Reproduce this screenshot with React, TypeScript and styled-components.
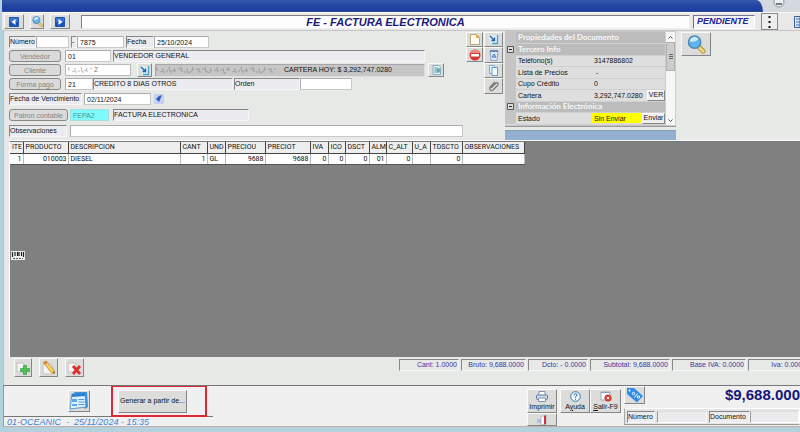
import React from "react";
import styled, { createGlobalStyle, css } from "styled-components";

const heading = 'Lato, "Liberation Sans", Arial, sans-serif';
const grid = 'Roboto, "Liberation Sans", Arial, sans-serif';
const sans = '"Liberation Sans", Arial, sans-serif';

const GlobalStyle = createGlobalStyle`
  *, *::before, *::after { box-sizing: border-box; }
  body { margin: 0; background: #c3dae4; overflow: hidden; }
  button, input { font: inherit; color: inherit; margin: 0; border-radius: 0; }
  svg { display: block; flex: none; }
`;

const raised = css`
  border: 1px solid;
  border-color: #fbfbfb #868686 #868686 #fbfbfb;
  background: #dcdcdb;
`;

const sunken = css`
  border: 1px solid;
  border-color: #868688 #f6f6f8 #f6f6f8 #868688;
`;

const Page = styled.div`
  display: flex;
  flex-direction: column;
  min-height: 100vh;
  padding: 0 0 5px 2px;
  background: #b4d2dd;
  font: 7px/10px ${sans};
  color: #111;
`;

const TitleBar = styled.header`
  display: flex;
  height: 12px;
  background: #d3d9de;
`;

const TitleFill = styled.div`
  flex: 1;
  background: linear-gradient(#3558a8, #2246a4 50%, #1c3f9f);
  border-bottom: 1px solid #2b4a90;
  border-top-right-radius: 8px 14px;
`;

const TitleEnd = styled.div`
  width: 37px;
  padding-left: 9px;
`;

const Toolbar = styled.nav`
  display: flex;
  align-items: center;
  height: 19px;
  padding: 1px 0 1px 2px;
  background: #e8e8e8;
  border-top: 1px solid #fafafa;
  border-bottom: 1px solid #c6c6c6;
  overflow: hidden;
`;

const ToolButton = styled.button<{ $w?: number; $h?: number }>`
  ${raised}
  display: flex;
  flex: none;
  flex-direction: column;
  align-items: center;
  justify-content: center;
  width: ${(p) => p.$w ?? 18}px;
  height: ${(p) => p.$h ?? 15}px;
  padding: 0;
  white-space: nowrap;
`;

const NavGroup = styled.div`
  display: flex;
  gap: 6px;
  width: 77px;
  flex: none;
`;

const DocTitle = styled.h1`
  flex: 1;
  height: 14px;
  margin: 0;
  border: 1px solid;
  border-color: #808080 #eee #eee #808080;
  background: #fdfdfd;
  color: #1b1b7c;
  font: italic bold 11px/12px ${sans};
  text-align: center;
`;

const StateBox = styled.output`
  width: 62px;
  height: 14px;
  margin: 0 6px 0 3px;
  padding-left: 3px;
  border: 1px solid;
  border-color: #70708c #fff #fff #70708c;
  background: #f4f4f8;
  color: #23239b;
  font: italic bold 9px/11px ${sans};
`;

const MenuButton = styled.button`
  display: flex;
  align-items: center;
  justify-content: center;
  width: 17px;
  height: 17px;
  margin-right: 16px;
  padding: 0;
  border: 1px solid #8b8b8b;
  background: #eee;
`;

const Body = styled.main`
  display: flex;
  flex: 1;
  flex-direction: column;
  margin-left: 1px;
  padding-left: 5px;
  border-left: 1px solid #b3c0c8;
  background: #e7e9e7;
`;

const Upper = styled.section`
  display: flex;
  align-items: flex-start;
  height: 110px;
  border-bottom: 1px solid #fff;
`;

const Form = styled.form`
  width: 457px;
  padding-top: 4px;
  flex: none;
`;

const FormRow = styled.div<{ $h: number }>`
  display: flex;
  align-items: center;
  height: ${(p) => p.$h}px;
  padding-right: 3px;
`;

const Label = styled.label<{ $w: number }>`
  ${sunken}
  width: ${(p) => p.$w}px;
  height: 12px;
  flex: none;
  background: #ececf0;
  line-height: 10px;
  white-space: nowrap;
`;

const Input = styled.input<{ $w?: number; $cyan?: boolean }>`
  width: ${(p) => (p.$w ? `${p.$w}px` : "auto")};
  flex: ${(p) => (p.$w ? "none" : "1")};
  min-width: 0;
  height: 12px;
  padding: 0 2px;
  border: 1px solid #c2c2c2;
  border-color: ${(p) => (p.$cyan ? "#a9dcdc" : "#adadad #c8c8c8 #c8c8c8 #adadad")};
  background: ${(p) => (p.$cyan ? "#7ffcfa" : "#fefefe")};
  color: ${(p) => (p.$cyan ? "#4d9494" : "#111")};
  line-height: 10px;
`;

const LookupButton = styled.button<{ $w: number }>`
  width: ${(p) => p.$w}px;
  height: 12px;
  padding: 0;
  flex: none;
  border: 1px solid #888;
  border-radius: 3px;
  background: #dadada;
  color: #848484;
  line-height: 9px;
  white-space: nowrap;
`;

const Gap = styled.span<{ $w: number }>`
  flex: none;
  width: ${(p) => p.$w}px;
`;

const MaskedField = styled.div`
  display: flex;
  align-items: center;
  width: 66px;
  height: 12px;
  padding-left: 2px;
  border: 1px solid #b8b8b8;
  background: #fefefe;

  input { border: 0; background: transparent; padding: 0 1px; height: 10px; color: #777; }
`;

const ClientInfo = styled.output`
  ${sunken}
  display: flex;
  align-items: center;
  justify-content: space-between;
  width: 270px;
  height: 13px;
  padding-right: 32px;
  border-color: #a6a6a6 #ddd #ddd #a6a6a6;
  background: #c6c6c6;
  white-space: nowrap;
`;

const ButtonColumn = styled.div<{ $w: number }>`
  display: flex;
  flex-direction: column;
  width: ${(p) => p.$w}px;
  flex: none;
  padding-top: 1px;
`;

const Side = styled.aside`
  width: 171px;
  margin-left: 2px;
  flex: none;
`;

const PanelFrame = styled.div`
  display: flex;
  height: 96px;
  margin-bottom: 3px;
  background: #c5c5c5;
  border-bottom: 1px solid #999;
`;

const PanelTable = styled.table`
  flex: 1;
  align-self: flex-start;
  border-collapse: collapse;
  table-layout: fixed;
  width: 160px;
  margin-top: 1px;
  background: #dedede;
  line-height: 9px;

  tr { height: 12px; }
  tr:nth-child(odd) { height: 11px; }
  td, th { padding: 0 0 0 2px; text-align: left; border-bottom: 1px solid #d0d0d0; white-space: nowrap; height: inherit; }
  .gutter { background: #c5c5c5; border: 0; padding: 0 2px; }
`;

const PanelHead = styled.th`
  background: #bcbcbc;
  color: #f8f8f8;
  font: bold 8px/9px ${heading};
`;

const StateCell = styled.div<{ $hot?: boolean }>`
  display: flex;
  align-items: center;
  justify-content: space-between;
  height: 10px;
  margin-left: -2px;
  padding-left: 2px;
  background: ${(p) => (p.$hot ? "#ffff00" : "transparent")};
`;

const SmallButton = styled.button<{ $w: number }>`
  ${raised}
  width: ${(p) => p.$w}px;
  height: 11px;
  padding: 0;
  background: #eee;
  line-height: 8px;
`;

const ScrollBar = styled.div`
  display: flex;
  flex-direction: column;
  align-items: center;
  width: 11px;
  flex: none;
  padding: 4px 0 3px;
  background: #f7f7f7;
  border: 1px solid #ccc;
`;

const Thumb = styled.div`
  display: flex;
  align-items: center;
  justify-content: center;
  width: 9px;
  height: 29px;
  margin: 3px 0 auto;
  background: #cdcdcd;
  border: 1px solid #b0b0b0;
`;

const BlueStrip = styled.div`
  height: 10px;
  background: #93b0d2;
  border-top: 1px solid #8aa0ba;
`;

const GridArea = styled.section`
  position: relative;
  flex: 1;
  border-top: 1px solid #777;
  border-left: 1px solid #fff;
  background: #808080;
`;

const Items = styled.table`
  width: 514px;
  border-collapse: collapse;
  table-layout: fixed;
  background: #fdfdfd;
  font: 7px/10px ${grid};

  th, td { height: 11px; padding: 0 1px 0 2px; white-space: nowrap; font-weight: normal; }
  th { padding: 0 0 0 2px; text-align: left; background: #eeeeee; border-right: 1px solid #444; border-bottom: 1px solid #444; }
  td { border-right: 1px solid #bbb; border-bottom: 1px solid #555; }
`;

const Cell = styled.td<{ $left?: boolean }>`
  text-align: ${(p) => (p.$left ? "left" : "right")};
`;

const BarcodeButton = styled.button`
  position: absolute;
  left: 1px;
  top: 109px;
  padding: 0;
  border: 0;
  background: #eee;
`;

const TotalsBar = styled.section`
  display: flex;
  align-items: flex-start;
  justify-content: space-between;
  height: 28px;
  padding: 1px 0 0 5px;
  background: #e7e9e7;
`;

const EditButtons = styled.div`
  display: flex;
  gap: 7px;
`;

const Totals = styled.div`
  display: flex;
  width: 401px;
  gap: 2px;
  padding-top: 1px;
  overflow: hidden;
  color: #3e33a2;
`;

const Total = styled.output<{ $w: number }>`
  ${sunken}
  flex: none;
  width: ${(p) => p.$w}px;
  height: 12px;
  padding-right: 1px;
  text-align: right;
  white-space: nowrap;
`;

const Footer = styled.footer`
  display: flex;
  align-items: flex-start;
  height: 42px;
  margin-left: 1px;
  border-top: 1px solid #777;
  border-left: 1px solid #999;
  border-bottom: 1px solid #c2adb0;
  background: #f0f0f0;
  overflow: hidden;
`;

const FooterLeft = styled.div`
  flex: 1;
`;

const FooterActions = styled.div`
  display: flex;
  height: 30px;
  gap: 21px;
  padding: 0 0 0 64px;
  align-items: center;
`;

const Highlight = styled.div`
  display: flex;
  align-items: center;
  width: 96px;
  height: 32px;
  padding-left: 5px;
  border: 2px solid #dc2734;
`;

const StatusLine = styled.p`
  width: 209px;
  height: 11px;
  margin: 0;
  padding-left: 3px;
  border-top: 1px solid #777;
  color: #3d82d4;
  font: italic 9px/10px ${sans};
  white-space: pre;
`;

const FooterButtons = styled.div`
  display: flex;
  padding-top: 3px;
`;

const FooterRight = styled.div`
  width: 176px;
  margin-left: 3px;
`;

const AmountRow = styled.div`
  display: flex;
  align-items: flex-start;
  justify-content: space-between;
  height: 22px;
`;

const Amount = styled.output`
  flex: none;
  color: #14147c;
  font: bold 15px/18px ${sans};
  white-space: nowrap;
`;

const DocRow = styled.div`
  display: flex;
  align-items: center;
  height: 17px;
  padding-left: 2px;
  border: 1px solid;
  border-color: #fff #fff #999 #aaa;
  background: #e4e4e4;
`;

const FlatInput = styled.input<{ $w?: number }>`
  width: ${(p) => (p.$w ? `${p.$w}px` : "auto")};
  flex: ${(p) => (p.$w ? "none" : "1")};
  min-width: 0;
  height: 12px;
  padding: 0 2px;
  border: 1px solid;
  border-color: #ddd #fff #fff #999;
  background: #ebebee;
`;

const NavIcon = ({ flip }: { flip?: boolean }) => (
  <svg width="10" height="10" viewBox="0 0 10 10">
    <rect width="10" height="10" rx="1" fill="#1c55b8" />
    <path d="M1 1h8v4H1z" fill="#3974cf" />
    <path d={flip ? "M3.5 2v6l4-3z" : "M6.5 2v6l-4-3z"} fill="#fff" />
  </svg>
);

const Magnifier = ({ size }: { size: number }) => (
  <svg width={size} height={size} viewBox="0 0 20 20">
    <path d="M12 12l5 5" stroke="#a98f3a" strokeWidth="5" strokeLinecap="round" />
    <path d="M12 12l5 5" stroke="#efd77a" strokeWidth="3" strokeLinecap="round" />
    <circle cx="8" cy="7.500" r="6.500" fill="#5eb5ee" stroke="#4c86b8" strokeWidth="1.500" />
    <path d="M3 7a5 5 0 0 1 9-3q-2 4-9 3z" fill="#c9ecff" />
  </svg>
);

const ArrowDoc = () => (
  <svg width="11" height="11" viewBox="0 0 11 11">
    <path d="M1 1l9 1v8H3z" fill="#d9f1fb" />
    <path d="M9.500 1v8.500H4" fill="none" stroke="#4aa3cc" strokeWidth="1.300" />
    <path d="M2 2l4 4M6.500 3.500v3H3.500" fill="none" stroke="#2c5d9c" strokeWidth="1.300" />
  </svg>
);

const SheetIcon = () => (
  <svg width="9" height="10" viewBox="0 0 9 10">
    <path d="M1 .5h5.500l2 2v7H1z" fill="#e5f3fb" stroke="#6aa0c4" strokeWidth=".8" />
    <path d="M2.500 3h3M2.500 5h5M2.500 7h5" stroke="#4a9a5a" />
    <path d="M5 4h3M5 6h3" stroke="#3c7fc6" />
  </svg>
);

const Smudge = ({ w, color }: { w: number; color: string }) => (
  <svg width={w} height="8" viewBox={`0 0 ${w} 8`}>
    <path
      d={Array.from({ length: Math.floor(w / 6) }, (_, i) => `M${i * 6 + 1} ${1 + (i % 2)}l${(i % 3) - 1} ${3 + (i % 3)}h2M${i * 6 + 4} ${6 - (i % 4)}l2 ${(i % 3) - 1}`).join("")}
      stroke={color}
      strokeWidth=".8"
      fill="none"
    />
  </svg>
);

const Expander = () => (
  <svg width="7" height="7" viewBox="0 0 7 7">
    <path d="M.5.5h6v6h-6z" fill="#ddd" stroke="#555" />
    <path d="M2 3.500h3" stroke="#222" />
  </svg>
);

const Chevron = ({ down }: { down?: boolean }) => (
  <svg width="5" height="3" viewBox="0 0 5 3">
    <path d={down ? "M.5.5l2 2 2-2" : "M.5 2.500l2-2 2 2"} fill="none" stroke="#555" />
  </svg>
);

const columns: [string, number, string, boolean?][] = [
  ["ITE", 13, "1"],
  ["PRODUCTO", 45, "010003"],
  ["DESCRIPCION", 112, "DIESEL", true],
  ["CANT", 27, "1"],
  ["UND", 18, "GL", true],
  ["PRECIOU", 40, "9688"],
  ["PRECIOT", 45, "9688"],
  ["IVA", 18, "0"],
  ["ICO", 17, "0"],
  ["DSCT", 24, "0"],
  ["ALM", 17, "01"],
  ["C_ALT", 26, "0"],
  ["U_A", 18, ""],
  ["TDSCTO", 32, "0"],
  ["OBSERVACIONES", 62, ""],
];

const totals: [string, number][] = [
  ["Cant: 1.0000", 60],
  ["Bruto: 9,688.0000", 65],
  ["Dcto: - 0.0000", 60],
  ["Subtotal: 9,688.0000", 80],
  ["Base IVA: 0.0000", 74],
  ["Iva: 0.0000", 60],
];

const PropertyRow = ({ name, children }: { name: string; children: React.ReactNode }) => (
  <tr>
    <td className="gutter" />
    <td>{name}</td>
    <td>{children}</td>
  </tr>
);

const SectionRow = ({ name }: { name: string }) => (
  <tr>
    <td className="gutter"><Expander /></td>
    <PanelHead colSpan={2}>{name}</PanelHead>
  </tr>
);

export default function App() {
  return (
    <Page>
      <GlobalStyle />
      <TitleBar>
        <TitleFill />
        <TitleEnd>
          <svg width="14" height="10" viewBox="0 0 14 10">
            <circle cx="7" cy="2" r="5" fill="#eceff1" stroke="#8b969e" />
            <path d="M4 4h6" stroke="#555" strokeWidth="1.500" />
          </svg>
        </TitleEnd>
      </TitleBar>

      <Toolbar>
        <NavGroup>
          <ToolButton $w={20} aria-label="Anterior"><NavIcon /></ToolButton>
          <ToolButton $w={14} aria-label="Buscar"><Magnifier size={11} /></ToolButton>
          <ToolButton $w={20} aria-label="Siguiente"><NavIcon flip /></ToolButton>
        </NavGroup>
        <DocTitle>FE - FACTURA ELECTRONICA</DocTitle>
        <StateBox>PENDIENTE</StateBox>
        <MenuButton aria-label="Más opciones">
          <svg width="3" height="12" viewBox="0 0 3 12">
            <path d="M.5 0h2v2h-2zM.5 5h2v2h-2zM.5 10h2v2h-2z" fill="#111" />
          </svg>
        </MenuButton>
        <svg width="6" height="12" viewBox="0 0 6 12">
          <path d="M.5.5H6v11H.5z" fill="#dfe9f5" stroke="#3b5f96" />
          <path d="M2 3h4M2 6h4M2 9h4" stroke="#3b6fb6" />
        </svg>
      </Toolbar>

      <Body>
        <Upper>
          <Form>
            <FormRow $h={14}>
              <Label $w={27} htmlFor="numero">Número</Label>
              <Input id="numero" $w={33} />
              <Gap $w={2} />
              <Label $w={6} htmlFor="consecutivo">-</Label>
              <Input id="consecutivo" $w={47} defaultValue="7875" />
              <Gap $w={2} />
              <Label $w={28} htmlFor="fecha">Fecha</Label>
              <Input id="fecha" $w={55} defaultValue="25/10/2024" />
            </FormRow>
            <FormRow $h={14}>
              <LookupButton type="button" $w={52}>Vendedor</LookupButton>
              <Gap $w={4} />
              <Input aria-label="Vendedor" $w={46} defaultValue="01" />
              <Gap $w={2} />
              <Label as="output" $w={312}>VENDEDOR GENERAL</Label>
            </FormRow>
            <FormRow $h={14}>
              <LookupButton type="button" $w={52}>Cliente</LookupButton>
              <Gap $w={4} />
              <MaskedField>
                <Smudge w={25} color="#aaa" />
                <Input aria-label="Cliente" defaultValue="2" />
              </MaskedField>
              <Gap $w={6} />
              <ToolButton type="button" $w={15} $h={14} aria-label="Abrir cliente"><ArrowDoc /></ToolButton>
              <Gap $w={3} />
              <ClientInfo>
                <Smudge w={121} color="#909090" />
                CARTERA HOY: $ 3,292,747.0280
              </ClientInfo>
              <Gap $w={3} />
              <ToolButton type="button" $w={16} $h={14} aria-label="Estado de cartera"><SheetIcon /></ToolButton>
            </FormRow>
            <FormRow $h={14}>
              <LookupButton type="button" $w={52}>Forma pago</LookupButton>
              <Gap $w={4} />
              <Input aria-label="Forma pago" $w={28} defaultValue="21" />
              <Label as="output" $w={140}>CREDITO 8 DIAS OTROS</Label>
              <Gap $w={1} />
              <Label $w={66} htmlFor="orden">Orden</Label>
              <Input id="orden" $w={52} />
            </FormRow>
            <FormRow $h={16}>
              <Label $w={73} htmlFor="vence">Fecha de Vencimiento</Label>
              <Gap $w={2} />
              <Input id="vence" $w={67} defaultValue="02/11/2024" />
              <Gap $w={3} />
              <svg width="10" height="10" viewBox="0 0 10 10">
                <rect width="10" height="10" fill="#c6d0f4" />
                <path d="M2 5l3 3 3-7-3 1z" fill="#2a5cc4" />
              </svg>
            </FormRow>
            <FormRow $h={16}>
              <LookupButton type="button" $w={59}>Patron contable</LookupButton>
              <Gap $w={2} />
              <Input aria-label="Patron contable" $w={39} $cyan defaultValue="FEPA2" />
              <Gap $w={4} />
              <Label as="output" $w={136}>FACTURA ELECTRONICA</Label>
            </FormRow>
            <FormRow $h={16}>
              <Label $w={58} htmlFor="obs">Observaciones</Label>
              <Gap $w={3} />
              <Input id="obs" />
            </FormRow>
          </Form>

          <ButtonColumn $w={18}>
            <ToolButton $w={17} aria-label="Nuevo">
              <svg width="10" height="11" viewBox="0 0 10 11">
                <path d="M.5.5h6l3 3v7h-9z" fill="#fffdf2" stroke="#b8a678" />
                <path d="M6 0l4 4H6z" fill="#f0a94a" />
              </svg>
            </ToolButton>
            <ToolButton $w={17} aria-label="Anular">
              <svg width="12" height="12" viewBox="0 0 12 12">
                <circle cx="6" cy="6" r="5.500" fill="#d3372f" />
                <path d="M1 4a5.500 5.500 0 0 1 10 0z" fill="#ec8a80" />
                <path d="M2 5h8v2.500H2z" fill="#fff" />
              </svg>
            </ToolButton>
          </ButtonColumn>
          <ButtonColumn $w={19}>
            <ToolButton $w={19} aria-label="Exportar"><ArrowDoc /></ToolButton>
            <ToolButton $w={19} $h={16} aria-label="Reciclar">
              <svg width="10" height="12" viewBox="0 0 10 12">
                <path d="M1 2h8l-1 9.500H2z" fill="#dbe7f6" stroke="#8fa8ca" />
                <path d="M1 2h8" stroke="#6f8ab2" strokeWidth="2" />
                <path d="M3 8l2-3 2 3z" fill="none" stroke="#3f73c4" />
              </svg>
            </ToolButton>
            <ToolButton $w={19} aria-label="Copiar">
              <svg width="9" height="11" viewBox="0 0 9 11">
                <path d="M.5.5h5v8h-5z" fill="#e1effb" stroke="#7db0de" />
                <path d="M3 2.500h5.500v8H3z" fill="#f3f9ff" stroke="#5f9cd6" />
              </svg>
            </ToolButton>
            <ToolButton $w={19} $h={16} aria-label="Adjuntar">
              <svg width="12" height="12" viewBox="0 0 12 12">
                <path d="M3 8l5-5q1.500-1 2 .5t-1 2.500L5 10q-2 1.500-3-.5T3 6l4-4" fill="none" stroke="#777" strokeWidth="1.200" />
              </svg>
            </ToolButton>
          </ButtonColumn>

          <Side>
            <PanelFrame>
              <PanelTable>
                <colgroup><col width="11" /><col width="76" /><col /></colgroup>
                <tbody>
                  <tr>
                    <td className="gutter" />
                    <PanelHead colSpan={2}>Propiedades del Documento</PanelHead>
                  </tr>
                  <SectionRow name="Tercero Info" />
                  <PropertyRow name="Teléfono(s)">3147886802</PropertyRow>
                  <PropertyRow name="Lista de Precios">&nbsp;-</PropertyRow>
                  <PropertyRow name="Cupo Crédito">0</PropertyRow>
                  <PropertyRow name="Cartera">
                    <StateCell>3,292,747.0280<SmallButton $w={18}>VER</SmallButton></StateCell>
                  </PropertyRow>
                  <SectionRow name="Información Electrónica" />
                  <PropertyRow name="Estado">
                    <StateCell $hot>Sin Enviar<SmallButton $w={23}>Enviar</SmallButton></StateCell>
                  </PropertyRow>
                </tbody>
              </PanelTable>
              <ScrollBar>
                <Chevron />
                <Thumb>
                  <svg width="4" height="5" viewBox="0 0 4 5">
                    <path d="M0 .5h4M0 2.500h4M0 4.500h4" stroke="#666" />
                  </svg>
                </Thumb>
                <Chevron down />
              </ScrollBar>
            </PanelFrame>
            <BlueStrip />
          </Side>

          <Gap $w={5} />
          <ButtonColumn $w={30}>
            <ToolButton $w={30} $h={24} aria-label="Consultar"><Magnifier size={19} /></ToolButton>
          </ButtonColumn>
        </Upper>

        <GridArea>
          <Items>
            <colgroup>{columns.map(([name, w]) => <col key={name} width={w} />)}</colgroup>
            <thead><tr>{columns.map(([name]) => <th key={name}>{name}</th>)}</tr></thead>
            <tbody><tr>{columns.map(([name, , value, left]) => <Cell key={name} $left={left}>{value}</Cell>)}</tr></tbody>
          </Items>
          <BarcodeButton aria-label="Código de barras">
            <svg width="14" height="9" viewBox="0 0 14 9">
              <path d="M1.500 1v5M4 1v4M6.500 1v4M8 1v4M10.500 1v4M12.500 1v5" stroke="#222" strokeWidth="1.200" />
              <path d="M2 7.500h10" stroke="#556" strokeDasharray="2 1" />
            </svg>
          </BarcodeButton>
        </GridArea>

        <TotalsBar>
          <EditButtons>
            <ToolButton $w={18} $h={19} aria-label="Agregar línea">
              <svg width="14" height="16" viewBox="0 0 14 16">
                <path d="M1 3h7v9H1z" fill="#f5f5f5" stroke="#c2c2c2" />
                <path d="M7.500 5.500h3v3h3v3h-3v3h-3v-3h-3v-3h3z" fill="#4cc352" stroke="#2f9038" strokeWidth=".6" />
              </svg>
            </ToolButton>
            <ToolButton $w={19} $h={19} aria-label="Editar línea">
              <svg width="14" height="16" viewBox="0 0 14 16">
                <path d="M1 4h9v10H1z" fill="#f5f5f5" stroke="#c2c2c2" />
                <path d="M1.500 2.500l2.500-1.500 8 9 .5 3.500-3.500-1z" fill="#f6cf5c" stroke="#b07a1e" strokeWidth=".7" />
                <path d="M1.500 2.500l2.500-1.500 1.500 1.700-2.500 2z" fill="#d9833c" />
                <path d="M11 12l1.500 1.500-.3-2z" fill="#333" />
              </svg>
            </ToolButton>
            <ToolButton $w={19} $h={19} aria-label="Eliminar línea">
              <svg width="15" height="16" viewBox="0 0 15 16">
                <path d="M1 3h8v9H1z" fill="#f5f5f5" stroke="#c2c2c2" />
                <path d="M6 6l7 8M13 6l-7 8" stroke="#dc2f2a" strokeWidth="2.800" />
              </svg>
            </ToolButton>
          </EditButtons>
          <Totals>{totals.map(([text, w]) => <Total key={text} $w={w}>{text}</Total>)}</Totals>
        </TotalsBar>
      </Body>

      <Footer>
        <FooterLeft>
          <FooterActions>
            <ToolButton $w={22} $h={22} aria-label="Plantillas">
              <svg width="20" height="20" viewBox="0 0 20 20">
                <path d="M5 1h13l1 15-3 2z" fill="#3a93e0" />
                <path d="M3 3l13-1 1 14-16 2z" fill="#dff0fd" stroke="#3c82c4" strokeWidth=".8" />
                <path d="M3 3l13-1v3L3 6z" fill="#2a7fd4" />
                <path d="M3 8h5v3H3zM3 13h5v2H3z" fill="#5aa9ea" />
                <path d="M9.500 8.500h5.500M9.500 11h6M9.500 13.500h6" stroke="#4a9be0" strokeWidth="1.200" />
              </svg>
            </ToolButton>
            <Highlight>
              <ToolButton $w={69} $h={23}>Generar a partir de...</ToolButton>
            </Highlight>
          </FooterActions>
          <StatusLine>01-OCEANIC  -  25/11/2024 - 15:35</StatusLine>
        </FooterLeft>

        <FooterButtons>
          <div>
            <ToolButton $w={30} $h={24}>
              <svg width="12" height="11" viewBox="0 0 12 11">
                <path d="M3 4V.5h6V4" fill="#fff" stroke="#7d93b5" />
                <rect x=".5" y="4" width="11" height="4.500" rx="1" fill="#cfdaea" stroke="#5f7ba6" />
                <path d="M2.500 7h7v3.500h-7z" fill="#fff" stroke="#7d93b5" />
              </svg>
              Imprimir
            </ToolButton>
            <ToolButton $w={30} $h={13} aria-label="Cerrar documento">
              <svg width="12" height="10" viewBox="0 0 12 10">
                <path d="M1 4h5v4H1z" fill="#a9c4e6" />
                <path d="M5 2l5-2v9l-5 1z" fill="#fff" stroke="#9a9ab0" strokeWidth=".6" />
                <path d="M8 1l2-1v9l-2 .5z" fill="#cc3540" />
              </svg>
            </ToolButton>
          </div>
          <Gap $w={3} />
          <ToolButton $w={30} $h={24}>
            <svg width="11" height="11" viewBox="0 0 11 11">
              <circle cx="5.500" cy="5.500" r="4.800" fill="#eff7fd" stroke="#3f77a8" />
              <path d="M4 4.300q0-1.500 1.500-1.500T7 4.200q0 .8-1.500 1.600v.8M5.500 7.800v1" fill="none" stroke="#2c639a" />
            </svg>
            <span>A<u>y</u>uda</span>
          </ToolButton>
          <ToolButton $w={31} $h={24}>
            <svg width="12" height="11" viewBox="0 0 12 11">
              <path d="M1 1h9v8H1z" fill="#fbfbfb" stroke="#a9a9a9" />
              <path d="M1 1.500h9" stroke="#7d9bc4" />
              <circle cx="8" cy="7" r="3.500" fill="#d1362f" />
              <path d="M6.700 5.700l2.600 2.600M9.300 5.700L6.700 8.300" stroke="#fff" />
            </svg>
            <span><u>S</u>alir-F9</span>
          </ToolButton>
        </FooterButtons>

        <FooterRight>
          <AmountRow>
            <ToolButton $w={21} $h={18} aria-label="Descuentos">
              <svg width="18" height="16" viewBox="0 0 18 16">
                <path d="M1 1h7l9 8-6 6.500L1 7z" fill="#2f8de8" />
                <circle cx="3.500" cy="3.500" r="1" fill="#fff" />
                <path d="M8.500 10.500l3-4" stroke="#fff" />
                <circle cx="7.500" cy="6.500" r="1.200" fill="none" stroke="#fff" />
                <circle cx="12.500" cy="10" r="1.200" fill="none" stroke="#fff" />
              </svg>
            </ToolButton>
            <Amount>$9,688.000</Amount>
          </AmountRow>
          <DocRow>
            <Label $w={28} htmlFor="docnum">Número</Label>
            <Gap $w={2} />
            <FlatInput id="docnum" $w={50} />
            <Gap $w={2} />
            <Label $w={41} htmlFor="docref">Documento</Label>
            <FlatInput id="docref" />
          </DocRow>
        </FooterRight>
      </Footer>
    </Page>
  );
}
